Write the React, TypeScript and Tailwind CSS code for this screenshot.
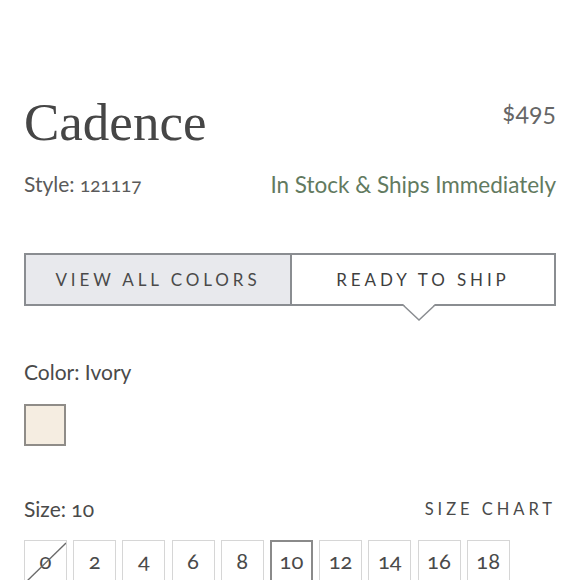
import React from "react";

const SIZES = ["0", "2", "4", "6", "8", "10", "12", "14", "16", "18"];

export default function App() {
  const selected = "10";
  return (
    <div className="min-h-screen bg-white px-6 pt-[86px] text-[#4a4a4a]" style={{ fontFamily: "Lato, 'Open Sans', sans-serif" }}>
      {/* Title + price */}
      <div className="flex items-start justify-between">
        <h1 className="text-[53px] leading-[72px] text-[#464646]" style={{ fontFamily: "'Liberation Serif', serif" }}>
          Cadence
        </h1>
        <div className="pt-[7px] text-[25px] text-[#666] [font-variant-numeric:oldstyle-nums]">$495</div>
      </div>

      {/* Style + stock */}
      <div className="mt-[12px] flex items-center justify-between text-[21px] leading-[28px]">
        <div className="text-[#5a5a5a]">
          Style: <span className="text-[19px] [font-variant-numeric:oldstyle-nums]">121117</span>
        </div>
        <div className="text-[22.5px] text-[#627a60]">In Stock &amp; Ships Immediately</div>
      </div>

      {/* Tabs */}
      <div className="relative mt-[54px] flex h-[53px] border-2 border-[#8a8d91]">
        <button className="flex w-[264px] items-center justify-center bg-[#e8e9ed] text-[17px] tracking-[0.23em] text-[#4a4a4a]">
          VIEW ALL COLORS
        </button>
        <div className="w-[2px] bg-[#8a8d91]" />
        <button className="flex flex-1 items-center justify-center bg-white text-[17px] tracking-[0.23em] text-[#3f3f3f]">
          READY TO SHIP
        </button>
        <svg className="absolute left-[377px] top-[49px]" width="32" height="18" viewBox="0 0 32 18">
          <polygon points="0,0 16,16 32,0" fill="white" />
          <polyline points="0,1 16,16 32,1" fill="none" stroke="#8a8d91" strokeWidth="1.5" />
        </svg>
      </div>

      {/* Color */}
      <div className="mt-[52px] text-[21px] leading-[28px] text-[#4a4a4a]">Color: Ivory</div>
      <div className="mt-[18px] h-[42px] w-[42px] border-2 border-[#8f8c88] bg-[#f5ede1]" />

      {/* Size */}
      <div className="mt-[49px] flex items-center justify-between">
        <div className="text-[21px] leading-[28px] text-[#4a4a4a]">
          Size: <span className="[font-variant-numeric:oldstyle-nums]">10</span>
        </div>
        <div className="text-[16.5px] tracking-[0.24em] text-[#4a4a4a]">SIZE CHART</div>
      </div>
      <div className="mt-[17px] flex gap-[6.2px]">
        {SIZES.map((s) => (
          <div
            key={s}
            className={`relative flex h-[44px] w-[43px] items-center justify-center pb-[4px] text-[22px] text-[#4a4a4a] [font-variant-numeric:oldstyle-nums] ${
              s === selected ? "border-2 border-[#8a8a8a]" : "border border-[#d6d6d6]"
            }`}
          >
            {s}
            {s === "0" && (
              <svg className="absolute inset-0" width="41" height="42" viewBox="0 0 41 42">
                <line x1="0" y1="42" x2="41" y2="2" stroke="#6a6a6a" strokeWidth="1.3" />
              </svg>
            )}
          </div>
        ))}
      </div>
    </div>
  );
}
